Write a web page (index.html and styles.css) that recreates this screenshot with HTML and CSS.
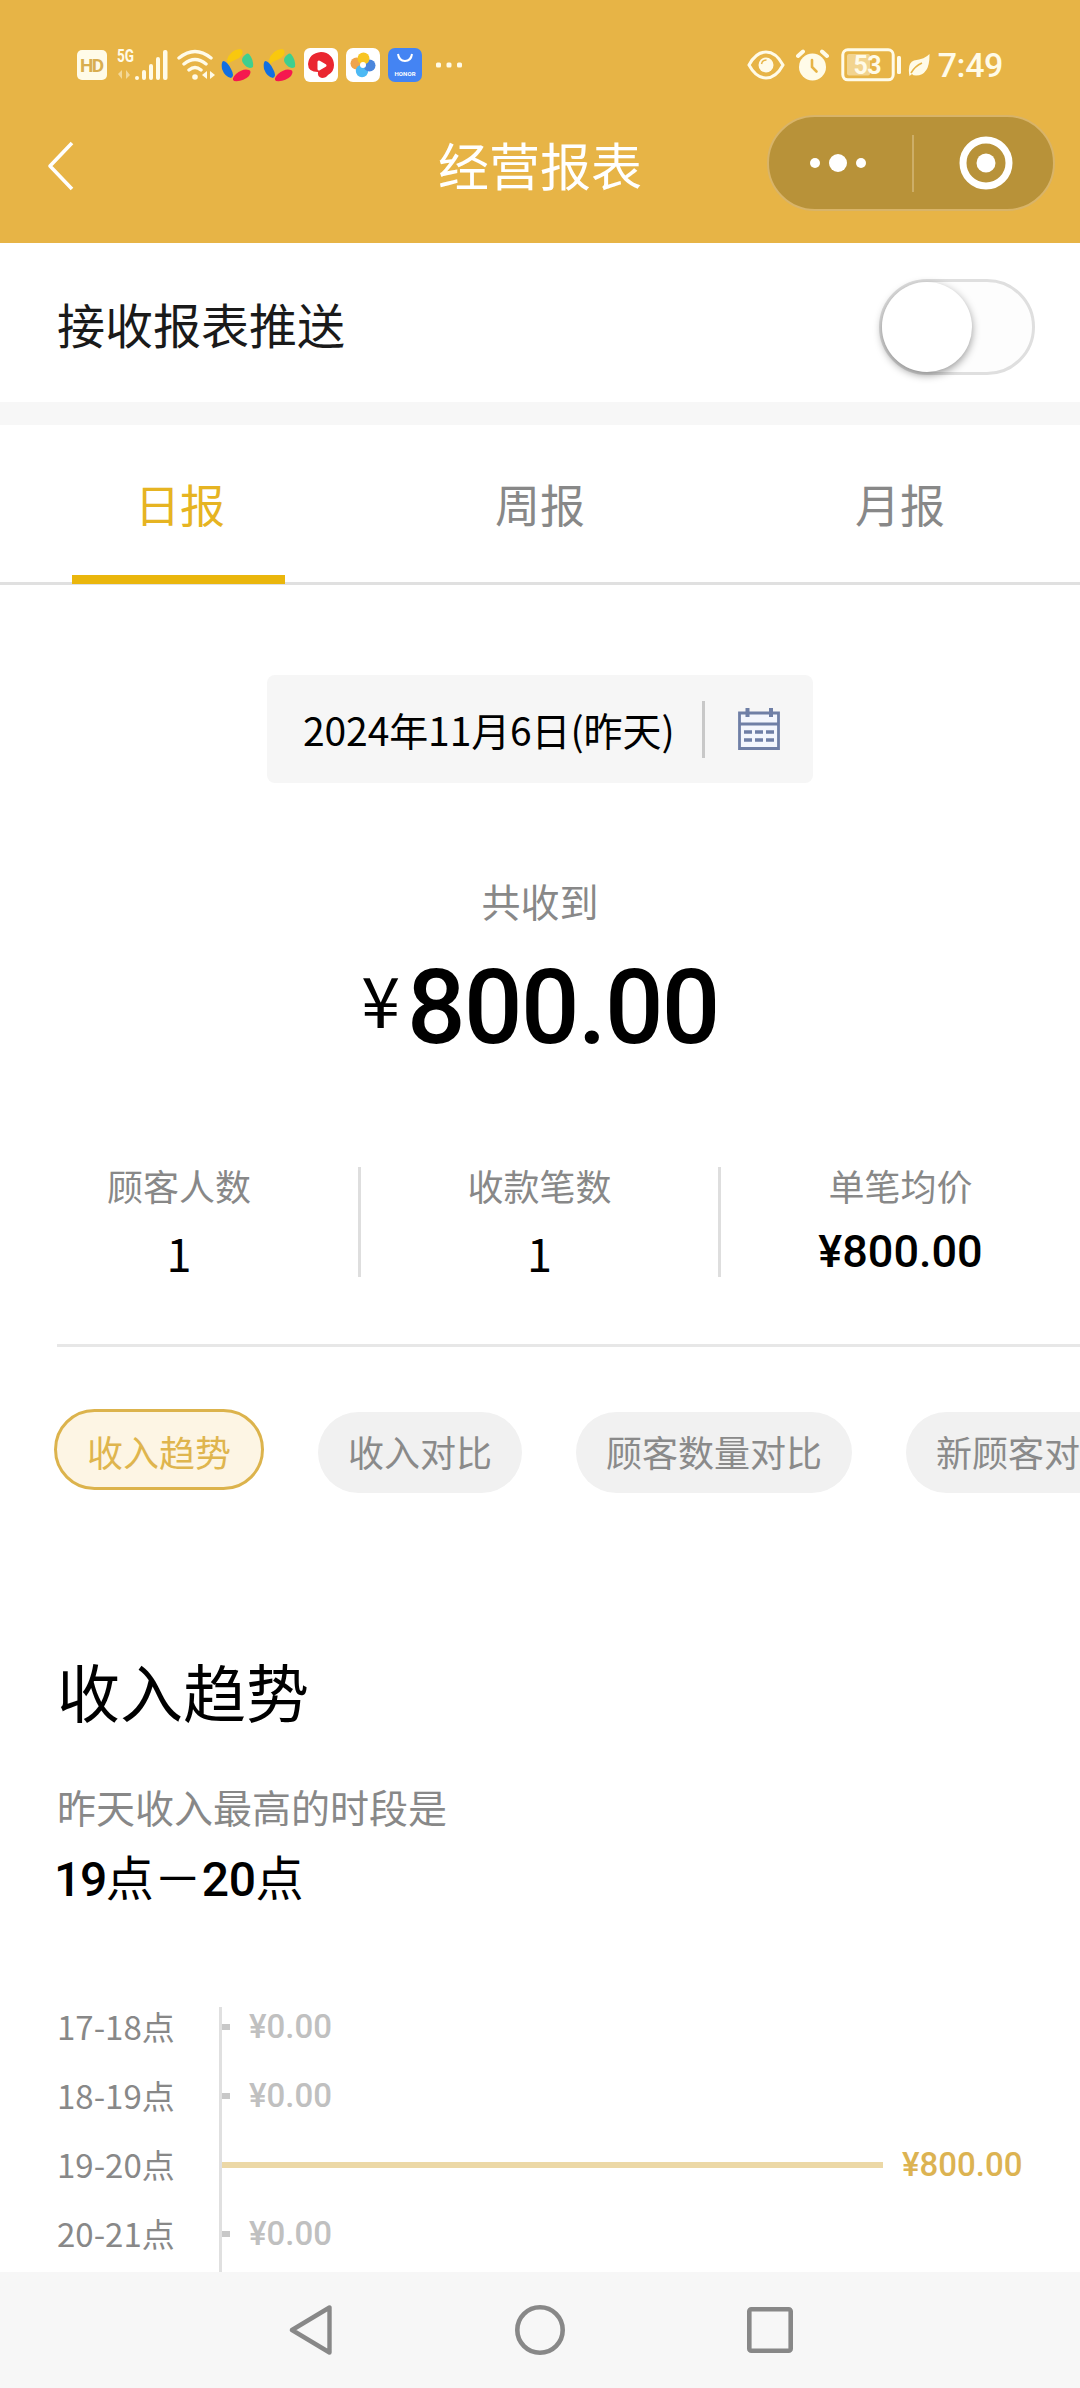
FILE: index.html
```html
<!DOCTYPE html>
<html lang="zh-CN">
<head>
<meta charset="utf-8">
<title>经营报表</title>
<link rel="stylesheet" href="styles.css">
</head>
<body>
<div class="screen">
  <header class="header">
    <div class="status">
      <div class="status-left">
        <svg class="ic-hd" width="30" height="30" viewBox="0 0 30 30"><rect width="30" height="30" rx="5" fill="#fffbe8"/><text x="15" y="22" text-anchor="middle" textLength="24" class="t-hd">HD</text></svg>
        <svg class="ic-signal" width="51" height="38" viewBox="0 -3 51 38" fill="#fffbe8"><text x="0" y="13" textLength="17" lengthAdjust="spacingAndGlyphs" class="t-5g">5G</text><path d="M5 21v9l-4-5zM9 21v9l4-4z" opacity=".5"/><rect x="18" y="27" width="4" height="4" rx="2"/><rect x="25" y="21" width="4" height="10" rx="2"/><rect x="32" y="15" width="4" height="16" rx="2"/><rect x="39" y="8" width="4" height="23" rx="2"/><rect x="46" y="1" width="4.500" height="30" rx="2"/></svg>
        <svg class="ic-wifi" width="38" height="32" viewBox="0 0 38 32" fill="none" stroke="#fffbe8" stroke-width="3.400" stroke-linecap="round"><path d="M2 9Q18 -4 34 9M7 15Q18 6 29 15M12 21Q18 16 24 21"/><circle cx="18" cy="28" r="2.800" fill="#fffbe8" stroke="none"/><path d="M30 22v8l-5-4zM33 22v8l5-4z" fill="#fffbe8" stroke="none"/></svg>
        <svg class="ic-wheel" width="33" height="33" viewBox="0 0 33 33"><path d="M6 11Q9 1 19 0Q23 1 21 6Q19 9 14 11Q9 13 7 15Z" fill="#f9c80e"/><path d="M22 8Q26 3 28 5Q33 11 32 18Q27 21 22 14Q20 11 22 8Z" fill="#3fcf8e"/><path d="M28 21Q31 22 28 27Q22 33 13 32Q10 30 15 25Q22 19 28 21Z" fill="#f5184f"/><path d="M2 12Q6 12 10 20Q14 27 10 29Q4 28 1 20Q0 14 2 12Z" fill="#126fe0"/></svg>
        <svg class="ic-wheel" width="33" height="33" viewBox="0 0 33 33"><path d="M6 11Q9 1 19 0Q23 1 21 6Q19 9 14 11Q9 13 7 15Z" fill="#f9c80e"/><path d="M22 8Q26 3 28 5Q33 11 32 18Q27 21 22 14Q20 11 22 8Z" fill="#3fcf8e"/><path d="M28 21Q31 22 28 27Q22 33 13 32Q10 30 15 25Q22 19 28 21Z" fill="#f5184f"/><path d="M2 12Q6 12 10 20Q14 27 10 29Q4 28 1 20Q0 14 2 12Z" fill="#126fe0"/></svg>
        <svg class="ic-app" width="34" height="34" viewBox="0 0 34 34"><rect width="34" height="34" rx="6" fill="#fff"/><path d="M17 4C25 4 30 10 30 17Q30 24 24 27Q22 30 18 30Q13 29 14 24Q4 24 4 16Q5 5 17 4Z" fill="#ea2630"/><path d="M15 14v7l6-3.500z" fill="#fff" stroke="#fff" stroke-width="3" stroke-linejoin="round"/></svg>
        <svg class="ic-app" width="34" height="34" viewBox="0 0 34 34"><rect width="34" height="34" rx="7" fill="#fff"/><circle cx="10.500" cy="15.500" r="6" fill="#efa44d"/><circle cx="16" cy="23" r="6.200" fill="#4cb9f4"/><circle cx="23.500" cy="17.500" r="6" fill="#4a86dc"/><circle cx="17.500" cy="10.500" r="6" fill="#f8c522"/><circle cx="17" cy="17" r="3" fill="#fff"/></svg>
        <svg class="ic-app" width="34" height="34" viewBox="0 0 34 34"><rect width="34" height="34" rx="7" fill="#4484f3"/><path d="M10 6Q11 13 17 13Q23 13 24 6" fill="none" stroke="#fff" stroke-width="2"/><text x="17" y="28" text-anchor="middle" textLength="21" class="t-honor">HONOR</text></svg>
        <svg class="ic-more" width="28" height="6" viewBox="0 0 28 6" fill="#fffbe8"><rect x="1" y=".5" width="5" height="5" rx="1.500"/><rect x="11.500" y=".5" width="5" height="5" rx="1.500"/><rect x="22" y=".5" width="5" height="5" rx="1.500"/></svg>
      </div>
      <div class="status-right">
        <svg class="ic-eye" width="38" height="30" viewBox="0 0 38 30"><path d="M2 15Q9 2 19 2T36 15Q29 28 19 28T2 15Z" fill="none" stroke="#fffbe8" stroke-width="3"/><circle cx="19" cy="15" r="7.500" fill="#fffbe8"/><path d="M14.500 14a5 5 0 0 1 5-4" stroke="#e7b446" stroke-width="1.500" fill="none"/></svg>
        <svg class="ic-alarm" width="33" height="32" viewBox="0 0 33 32"><circle cx="16.500" cy="18" r="13.500" fill="#fffbe8"/><path d="M2 7L7 2.500M31 7L26 2.500" stroke="#fffbe8" stroke-width="4" stroke-linecap="round"/><path d="M16 11v7l4.500 4.500" fill="none" stroke="#e7b446" stroke-width="2.600" stroke-linecap="round"/></svg>
        <svg class="ic-battery" width="61" height="34" viewBox="0 0 61 34"><rect x="1.800" y="1.800" width="50.400" height="30" rx="5" fill="none" stroke="#fffbe8" stroke-width="3"/><rect x="6" y="6" width="23" height="21.500" rx="2" fill="#fffbe8" opacity=".45"/><rect x="56" y="8" width="4" height="18" rx="1.500" fill="#fffbe8"/><text x="26.500" y="25.500" text-anchor="middle" textLength="28" class="t-bat">53</text></svg>
        <svg class="ic-leaf" width="22" height="23" viewBox="0 0 22 23"><path d="M21.500 0Q22 21 8 21.500Q5 21.500 4 20L1.500 22Q-1 9 6 6.500Q17 5 21.500 0Z" fill="#fffbe8"/><path d="M3 19Q7 12 14 9" fill="none" stroke="#e7b446" stroke-width="1.600"/></svg>
        <span class="clock">7:49</span>
      </div>
    </div>
    <div class="navbar">
      <svg class="back" width="27" height="50" viewBox="0 0 27 50"><path d="M25 2L3 25L25 48" fill="none" stroke="#fff" stroke-width="3.600" stroke-linejoin="round"/></svg>
      <h1 class="title">经营报表</h1>
      <div class="capsule">
        <svg width="56" height="20" viewBox="0 0 56 20" fill="#fff"><circle cx="5" cy="10" r="5"/><circle cx="28" cy="10" r="9"/><circle cx="51" cy="10" r="5"/></svg>
        <span class="capsule-line"></span>
        <svg width="54" height="54" viewBox="0 0 54 54"><circle cx="27" cy="27" r="23" fill="none" stroke="#fff" stroke-width="7"/><circle cx="27" cy="27" r="9.500" fill="#fff"/></svg>
      </div>
    </div>
  </header>

  <section class="push">
    <span class="push-label">接收报表推送</span>
    <span class="switch"><span class="knob"></span></span>
  </section>

  <nav class="tabs">
    <span class="tab active">日报</span>
    <span class="tab">周报</span>
    <span class="tab">月报</span>
  </nav>

  <main class="content">
    <div class="date">
      <span class="date-text">2024年11月6日(昨天)</span>
      <span class="date-line"></span>
      <svg width="42" height="42" viewBox="0 0 42 42" fill="none" stroke="#6f7fa6"><path d="M1.500 5H40.500V40.500H1.500Z" fill="#f3f6fd" stroke-width="2.800"/><path d="M1 16H41" stroke-width="3"/><path d="M9.500 0V9M33 0V9" stroke-width="4"/><path d="M6 24H14M17 24H25M28 24H36M6 32H14M17 32H25M28 32H36" stroke-width="3.400"/></svg>
    </div>
    <p class="total-label">共收到</p>
    <p class="total"><span class="yen">¥</span><span class="total-num">800.00</span></p>

    <div class="stats">
      <div class="stat"><span class="stat-label">顾客人数</span><span class="stat-value">1</span></div>
      <div class="stat"><span class="stat-label">收款笔数</span><span class="stat-value">1</span></div>
      <div class="stat"><span class="stat-label">单笔均价</span><span class="stat-value money">¥800.00</span></div>
    </div>

    <div class="pills">
      <span class="pill selected">收入趋势</span>
      <span class="pill">收入对比</span>
      <span class="pill">顾客数量对比</span>
      <span class="pill">新顾客对比</span>
    </div>

    <h2 class="heading">收入趋势</h2>
    <p class="sub">昨天收入最高的时段是</p>
    <p class="peak"><b class="from">19</b>点－<b>20</b>点</p>

    <div class="chart">
      <div class="hours">
        <span>17-18点</span><span>18-19点</span><span>19-20点</span><span>20-21点</span>
      </div>
      <div class="plot">
        <div class="row"><i class="bar" style="width:8px"></i><span>¥0.00</span></div>
        <div class="row"><i class="bar" style="width:8px"></i><span>¥0.00</span></div>
        <div class="row top"><i class="bar" style="width:661px"></i><span>¥800.00</span></div>
        <div class="row"><i class="bar" style="width:8px"></i><span>¥0.00</span></div>
      </div>
    </div>
  </main>

  <footer class="sysnav">
    <svg width="44" height="52" viewBox="0 0 44 52"><path d="M40.500 3.500V48.500L3 26Z" fill="none" stroke="#888" stroke-width="4.400" stroke-linejoin="round"/></svg>
    <svg width="50" height="50" viewBox="0 0 50 50"><circle cx="25" cy="25" r="22.700" fill="none" stroke="#888" stroke-width="4.600"/></svg>
    <svg width="46" height="46" viewBox="0 0 46 46"><rect x="2.300" y="2.300" width="41.400" height="41.400" rx="2" fill="none" stroke="#888" stroke-width="4.600"/></svg>
  </footer>
</div>
</body>
</html>
```

FILE: styles.css
```css
* { box-sizing: border-box; margin: 0; padding: 0; }
body {
  width: 1080px;
  background: #fff;
  font-family: "Noto Sans CJK SC", sans-serif;
  color: #000;
}
svg { display: block; flex: none; }
.screen {
  width: 1080px;
  height: 2388px;
  display: flex;
  flex-direction: column;
  overflow: hidden;
  white-space: nowrap;
}

.header { height: 243px; background: #e7b446; flex: none; }
.status {
  height: 115px;
  padding: 15px 77px 0;
  display: flex;
  justify-content: space-between;
  align-items: center;
}
.status-left, .status-right { display: flex; align-items: center; }
.ic-signal { margin-left: 10px; }
.ic-wifi { margin-left: 9px; }
.ic-wheel { margin-left: 6px; }
.ic-wheel + .ic-wheel { margin-left: 9px; }
.ic-app { margin-left: 8px; }
.ic-more { margin-left: 13px; }
.ic-alarm { margin-left: 11px; }
.ic-battery { margin-left: 12px; }
.ic-leaf { margin-left: 6px; }
.clock {
  margin-left: 8px;
  font: 500 34px/34px Roboto, sans-serif;
  letter-spacing: -.4px;
  color: #fffbe8;
}
.t-hd { font: 700 19px Roboto, sans-serif; fill: #d9ae50; }
.t-5g { font: 700 18px Roboto, sans-serif; }
.t-honor { font: 700 6px Roboto, sans-serif; fill: #fff; }
.t-bat { font: 700 25px Roboto, sans-serif; fill: #fffbe8; }

.navbar {
  height: 96px;
  display: grid;
  grid-template-columns: 1fr auto 1fr;
  align-items: center;
  padding: 0 25px 0 47px;
}
.title {
  font-size: 51px;
  line-height: 60px;
  font-weight: 400;
  color: #fff;
  margin: 2px 22px 0 0;
}
.back { margin-top: 6px; }
.capsule {
  justify-self: end;
  width: 288px;
  height: 96px;
  border: 2px solid #d9b468;
  border-radius: 48px;
  background: #b89239;
  display: flex;
  align-items: center;
  justify-content: space-between;
  padding: 0 40px 0 41px;
}
.capsule-line { width: 2px; height: 57px; background: #cdae68; }

.push {
  height: 159px;
  flex: none;
  display: flex;
  align-items: center;
  justify-content: space-between;
  padding: 8px 45px 0 57px;
}
.push-label { font-size: 48px; line-height: 60px; color: #1a1a1a; margin-top: -7px; }
.switch {
  width: 156px;
  height: 96px;
  border: 3px solid #dfdfdf;
  border-radius: 48px;
  background: #fdfdfd;
}
.knob {
  display: block;
  width: 90px;
  height: 90px;
  border-radius: 50%;
  background: #fff;
  box-shadow: 0 3px 9px rgba(0, 0, 0, .4);
}

.tabs {
  height: 183px;
  flex: none;
  display: grid;
  grid-template-columns: repeat(3, 360px);
  border-top: 23px solid #f7f7f7;
  border-bottom: 3px solid #e0e0e0;
}
.tab {
  position: relative;
  text-align: center;
  font-size: 45px;
  line-height: 157px;
  color: #888;
}
.tab.active { color: #e6b422; }
.tab.active::after {
  content: "";
  position: absolute;
  left: 72px;
  bottom: -2px;
  width: 213px;
  height: 9px;
  background: #eab60c;
}

.content { height: 1687px; flex: none; padding-top: 90px; overflow: hidden; }
.date {
  width: 546px;
  height: 108px;
  margin: 0 auto;
  border-radius: 8px;
  background: #f6f6f6;
  display: flex;
  align-items: center;
  padding: 0 33px 0 36px;
}
.date-text { font-size: 39px; line-height: 48px; width: 399px; letter-spacing: -.1px; }
.date-line { width: 3px; height: 57px; background: #c8c8c8; margin-right: 33px; }
.total-label {
  margin-top: 93px;
  font-size: 39px;
  line-height: 48px;
  text-align: center;
  color: #888;
}
.total {
  margin-top: 24px;
  height: 120px;
  display: flex;
  justify-content: center;
  line-height: 120px;
}
.yen { font-size: 70px; line-height: 99px; margin-right: 7px; }
.total-num { font: 500 103px/120px Roboto, sans-serif; letter-spacing: -1.6px; }

.stats { margin-top: 99px; height: 108px; display: grid; grid-template-columns: 361px 360px 359px; }
.stat { display: flex; flex-direction: column; text-align: center; }
.stat:not(:last-child) { border-right: 3px solid #dedede; }
.stat-label { font-size: 36px; line-height: 36px; color: #888; }
.stat-value { margin-top: 26px; font-size: 45px; line-height: 48px; }
.stat-value.money { margin-top: 25px; font-family: Roboto, sans-serif; font-weight: 500; }

.pills {
  margin: 69px 0 0 57px;
  border-top: 3px solid #e7e7e7;
  padding-top: 62px;
  display: flex;
  align-items: flex-end;
  gap: 54px;
}
.pill {
  flex: none;
  height: 81px;
  border-radius: 41px;
  padding: 0 30px;
  font-size: 36px;
  line-height: 79px;
  color: #8a8a8a;
  background: #f1f1f1;
}
.pill.selected {
  margin: 0 0 3px -3px;
  border: 3px solid #dcb34c;
  color: #dfb54e;
  background: #fdf5e4;
}

.heading { margin-top: 157px; font-size: 63px; line-height: 80px; font-weight: 400; padding-left: 57px; }
.sub { margin-top: 52px; font-size: 39px; line-height: 48px; color: #888; padding-left: 57px; }
.peak { margin-top: 15px; height: 60px; font-size: 48px; line-height: 60px; padding-left: 57px; }
.peak b { font: 500 48px/1 Roboto, sans-serif; letter-spacing: -.4px; }
.peak .from { margin-left: -3px; letter-spacing: -1.4px; }

.chart { margin-top: 102px; height: 265px; padding-left: 57px; display: flex; }
.hours {
  width: 162px;
  display: flex;
  flex-direction: column;
  gap: 29px;
  margin-top: -1px;
  font-size: 33px;
  line-height: 40px;
  color: #888;
}
.plot { flex: 1; border-left: 3px solid #e0e0e0; display: flex; flex-direction: column; gap: 29px; }
.row { display: flex; align-items: center; height: 40px; gap: 19px; color: #c0c0c0; }
.row span { font: 500 33px/40px Roboto, sans-serif; }
.bar { height: 6px; background: #c8c8c8; }
.row.top { color: #dcb352; }
.row.top .bar { background: #ecd8a6; }

.sysnav {
  height: 116px;
  flex: none;
  background: #f7f7f7;
  display: grid;
  grid-template-columns: 1fr 50px 1fr;
  column-gap: 182px;
  align-items: center;
}
.sysnav svg:first-child { justify-self: end; }
```
